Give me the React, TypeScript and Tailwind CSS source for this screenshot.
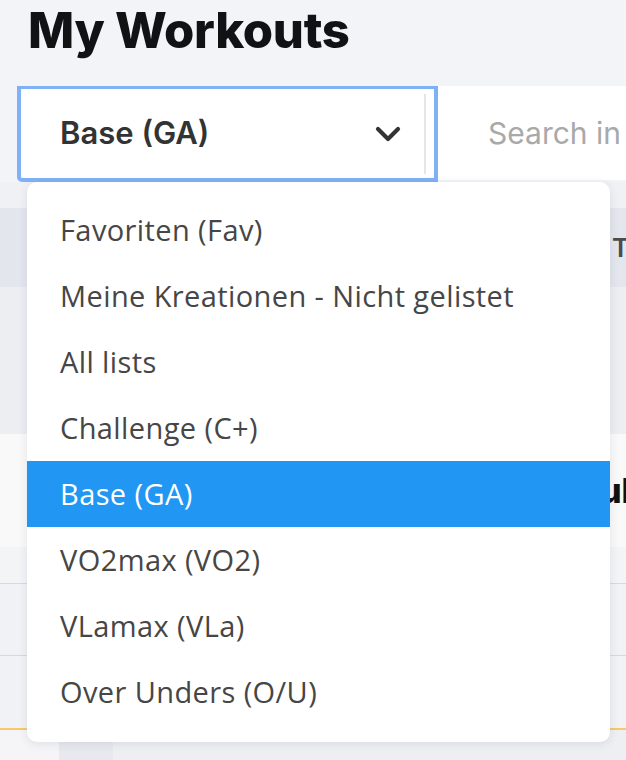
import { ChevronDown } from "lucide-react";

const OPTIONS = [
  "Favoriten (Fav)",
  "Meine Kreationen - Nicht gelistet",
  "All lists",
  "Challenge (C+)",
  "Base (GA)",
  "VO2max (VO2)",
  "VLamax (VLa)",
  "Over Unders (O/U)",
];

const SELECTED = "Base (GA)";

function ListSelect() {
  return (
    <div className="h-[96px] w-[421px] shrink-0 rounded-bl-[5px] border-[4px] border-t-[3px] border-[#80b1f7] bg-[#f8f9fb]">
      <div className="flex h-full items-center rounded-[6px] bg-white pl-[39px] pr-[8px]">
        <span className="flex-1 text-[31px] font-semibold text-[#333333] [font-family:Inter,'Liberation_Sans',sans-serif]">
          {SELECTED}
        </span>
        <ChevronDown className="mr-[16px] size-[40px] text-[#333333]" strokeWidth={2.5} />
        <div className="h-[80px] w-[2px] bg-[#e6e6e6]" />
      </div>
    </div>
  );
}

function Dropdown() {
  return (
    <ul className="absolute left-[27px] top-[182px] w-[583px] rounded-[10px] bg-white pb-[17px] pt-[15px] shadow-[0_2px_10px_rgba(30,40,70,0.10)] [font-family:'Open_Sans','Noto_Sans',sans-serif]">
      {OPTIONS.map((opt) => (
        <li
          key={opt}
          className={
            opt === SELECTED
              ? "flex h-[66px] items-center bg-[#2196f3] pl-[33px] text-[29px] tracking-[0.4px] text-white"
              : "flex h-[66px] items-center pl-[33px] text-[29px] tracking-[0.4px] text-[#464646]"
          }
        >
          {opt}
        </li>
      ))}
    </ul>
  );
}

export default function App() {
  return (
    <div className="relative h-[760px] w-[626px] overflow-hidden bg-[#f3f4f8]">
      <h1 className="pl-[28px] pt-[1px] text-[49px] font-extrabold leading-[60px] tracking-[-0.3px] text-[#111214] [font-family:Inter,'Liberation_Sans',sans-serif]">
        My Workouts
      </h1>

      {/* filter row */}
      <div className="mt-[25px] flex pl-[17px]">
        <ListSelect />
        <div className="flex h-[94px] flex-1 items-center bg-white pl-[50px] text-[30px] text-[#a9a9a9] [font-family:Inter,'Liberation_Sans',sans-serif]">
          Search in
        </div>
      </div>

      {/* table behind the open menu */}
      <div className="flex flex-col [font-family:Inter,'Liberation_Sans',sans-serif]">
        <div className="h-[26px] bg-[#f0f1f5]" />
        <div className="flex h-[79px] items-center bg-[#e4e6ee] pl-[612px] text-[26px] font-semibold text-[#4b4b4b]">
          Titel
        </div>
        <div className="h-[147px] bg-[#eceef2]" />
        <div className="flex h-[113px] items-center bg-[#f9f9f9] pl-[600px] text-[34px] font-extrabold text-[#111111]">
          ul
        </div>
        <div className="h-[37px] border-b border-[#d8d9dd] bg-[#f3f4f6]" />
        <div className="h-[72px] border-b border-[#d8d9dd] bg-[#f1f2f5]" />
        <div className="h-[74px] border-b-2 border-[#f9c86a] bg-[#f1f2f5]" />
        <div className="flex h-[40px] bg-[#eeeff3]">
          <div className="w-[59px] bg-[#f5f5f7]" />
          <div className="w-[54px] bg-[#e8e9ee]" />
        </div>
      </div>

      <Dropdown />
    </div>
  );
}
